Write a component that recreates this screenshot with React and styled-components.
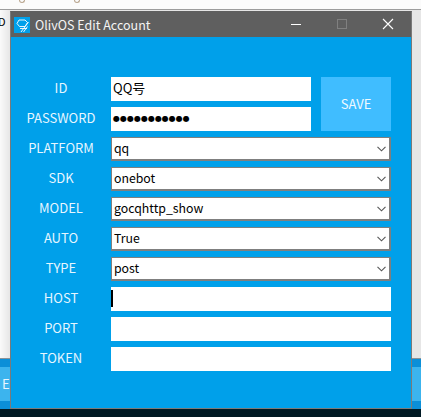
import React from 'react'
import styled, { createGlobalStyle } from 'styled-components'

const GlobalStyle = createGlobalStyle`
  html, body {
    margin: 0;
    padding: 0;
    background: #f0f0f0;
  }
  * { box-sizing: border-box; }
`

const FONT = `"Noto Sans CJK SC", "Noto Sans", sans-serif`

const Desktop = styled.div`
  position: relative;
  width: 421px;
  height: 417px;
  overflow: hidden;
  display: flex;
  flex-direction: column;
  font-family: ${FONT};
`

const TopStrip = styled.div`
  height: 10px;
  flex: none;
  display: flex;
  padding-left: 19px;
  gap: 49px;
  background: #fbfbfb;
  border-bottom: 1px solid #9c9c9c;
`

const StripArc = styled.span`
  width: 6px;
  height: 3px;
  border: 1px solid #b9a58e;
  border-top: 0;
  border-radius: 0 0 4px 4px;
`

const BackPane = styled.div`
  flex: 1;
  background: linear-gradient(90deg, #fafafa 0, #e6e6e6 10px, #e6e6e6 100%);
  padding-top: 4px;
  font-size: 11px;
  line-height: 14px;
  text-indent: -2px;
  color: #000;
`

const Taskbar = styled.div`
  height: 51px;
  flex: none;
  background: #0b8fd8;
  border-top: 1px solid #8a9298;
  padding: 8px 0;
  display: flex;
  justify-content: space-between;
`

const TaskButton = styled.div`
  width: 100%;
  background: #3cb4ee;
  color: #e8f6ff;
  font-size: 13px;
  line-height: 34px;
  padding-left: 2px;
`

const BottomBar = styled.div`
  height: 8px;
  flex: none;
  background: #001a24;
`

const Window = styled.div`
  position: absolute;
  left: 10px;
  top: 11px;
  width: 402px;
  height: 398px;
  display: flex;
  flex-direction: column;
  background: #00a0ea;
  border: 1px solid #7a7a7a;
  border-top-color: #5f5f5f;
`

const TitleBar = styled.div`
  height: 25px;
  flex: none;
  display: flex;
  align-items: center;
  background: #5f5f5f;
  color: #fff;
  padding-left: 3px;
`

const TitleIcon = styled.svg`
  width: 16px;
  height: 16px;
  flex: none;
`

const TitleText = styled.span`
  margin-left: 5px;
  font-size: 12.5px;
  line-height: 25px;
  color: #f4f4f4;
  flex: 1;
`

const WinControl = styled.svg`
  width: 46px;
  height: 25px;
  flex: none;
`

const Content = styled.div`
  flex: 1;
  display: grid;
  grid-template-columns: 100px 200px 10px 70px;
  grid-auto-rows: 24px;
  row-gap: 6px;
  padding-top: 40px;
`

const Label = styled.div`
  font-size: 13px;
  line-height: 22px;
  text-align: center;
  color: #e6f6ff;
  grid-column: 1;
  white-space: nowrap;
`

const Field = styled.div`
  position: relative;
  grid-column: ${(p) => (p.$short ? '2' : '2 / 5')};
  background: #fff;
  color: #000;
  font-size: 13px;
  line-height: 22px;
  padding-left: 2px;
  white-space: nowrap;
  overflow: hidden;
`

const Dots = styled.span`
  font-family: "DejaVu Sans", sans-serif;
  font-size: 8px;
  line-height: 24px;
  display: block;
`

const Caret = styled.span`
  position: absolute;
  left: 0;
  top: 3px;
  width: 2px;
  height: 17px;
  background: #000;
`

const SaveButton = styled.div`
  grid-column: 4;
  grid-row: 1 / 3;
  display: flex;
  align-items: center;
  justify-content: center;
  padding-bottom: 2px;
  background: #40bdff;
  color: #f0faff;
  font-size: 13px;
`

const Combo = styled.div`
  grid-column: 2 / 5;
  display: flex;
  align-items: center;
  justify-content: space-between;
  background: #fff;
  border: 2px solid #7f7f7f;
  border-left-width: 1px;
  border-top-width: 1px;
  color: #000;
  font-size: 12.3px;
  line-height: 19px;
  padding: 0 3px 1px 2px;
`

const Chevron = styled.svg`
  width: 9px;
  height: 6px;
  flex: none;
  margin-top: 2px;
`

const ACCOUNT_ROWS = [
  { label: 'PLATFORM', value: 'qq' },
  { label: 'SDK', value: 'onebot' },
  { label: 'MODEL', value: 'gocqhttp_show' },
  { label: 'AUTO', value: 'True' },
  { label: 'TYPE', value: 'post' },
]

function ComboRow({ label, value }) {
  return (
    <>
      <Label>{label}</Label>
      <Combo>
        {value}
        <Chevron viewBox="0 0 9 6">
          <path d="M0.5 0.8 L4.5 4.8 L8.5 0.8" fill="none" stroke="#555" strokeWidth="1.1" />
        </Chevron>
      </Combo>
    </>
  )
}

export default function App() {
  return (
    <>
      <GlobalStyle />
      <Desktop>
        <TopStrip>
          <StripArc />
          <StripArc />
        </TopStrip>
        <BackPane>D</BackPane>
        <Taskbar>
          <TaskButton>E'</TaskButton>
        </Taskbar>
        <BottomBar />

        <Window>
          <TitleBar>
            <TitleIcon viewBox="0 0 16 16">
              <rect width="16" height="16" fill="#00a0ea" />
              <path d="M5 3 H11 L13.5 5.5 L11 9.5 H5.5 L3 6.5 Z" fill="none" stroke="#fff" strokeWidth="0.9" />
              <path d="M7 15 L14.5 5 M9.5 15 L13.5 9.5 M6 11.5 H13" fill="none" stroke="#fff" strokeWidth="0.9" />
            </TitleIcon>
            <TitleText>OlivOS Edit Account</TitleText>
            <WinControl viewBox="0 0 46 25">
              <path d="M18 12.5 H28" stroke="#fff" strokeWidth="1" />
            </WinControl>
            <WinControl viewBox="0 0 46 25">
              <rect x="18.5" y="7.5" width="9" height="9" fill="none" stroke="#808080" strokeWidth="1" />
            </WinControl>
            <WinControl viewBox="0 0 46 25">
              <path d="M18 7 L28 17 M28 7 L18 17" stroke="#fff" strokeWidth="1.1" fill="none" />
            </WinControl>
          </TitleBar>
          <Content>
            <Label>ID</Label>
            <Field $short>QQ号</Field>
            <SaveButton>SAVE</SaveButton>
            <Label>PASSWORD</Label>
            <Field $short><Dots>●●●●●●●●●●●</Dots></Field>
            {ACCOUNT_ROWS.map((row) => (
              <ComboRow key={row.label} {...row} />
            ))}
            <Label>HOST</Label>
            <Field><Caret /></Field>
            <Label>PORT</Label>
            <Field />
            <Label>TOKEN</Label>
            <Field />
          </Content>
        </Window>
      </Desktop>
    </>
  )
}
